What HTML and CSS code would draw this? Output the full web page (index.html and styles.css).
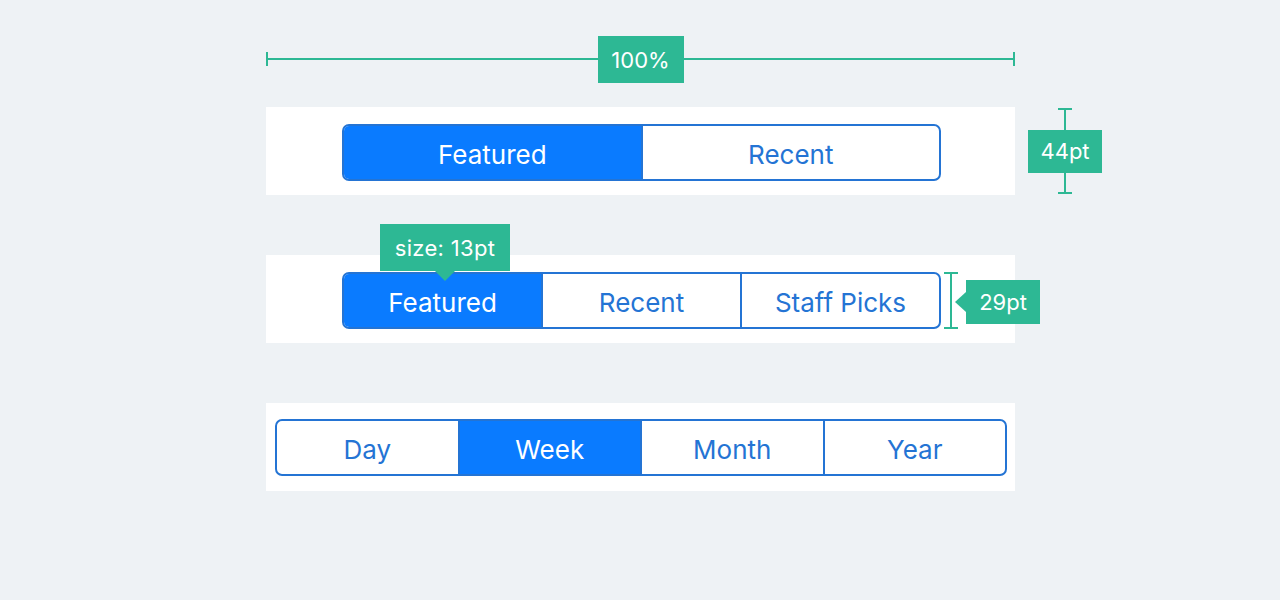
FILE: index.html
```html
<!DOCTYPE html>
<html lang="en">
<head>
  <meta charset="UTF-8" />
  <meta name="viewport" content="width=device-width, initial-scale=1.0"/>
  <title>Segmented Controls - Spec</title>
  <link rel="stylesheet" href="styles.css">
</head>
<body>
  <main class="spec">
    <div class="ruler">
      <span class="tag ruler-label">100%</span>
    </div>

    <div class="row">
      <section class="panel">
        <div class="segmented">
          <div class="segment active">Featured</div>
          <div class="segment">Recent</div>
        </div>
      </section>
      <div class="height-mark">
        <span class="tag mark-label">44pt</span>
      </div>
    </div>

    <div class="row">
      <section class="panel">
        <div class="segmented-wrap">
          <div class="segmented">
            <div class="segment active">Featured</div>
            <div class="segment">Recent</div>
            <div class="segment">Staff Picks</div>
          </div>
          <span class="tag size-tag">size: 13pt</span>
          <span class="bracket"></span>
          <span class="tag side-tag">29pt</span>
        </div>
      </section>
    </div>

    <div class="row">
      <section class="panel wide">
        <div class="segmented">
          <div class="segment">Day</div>
          <div class="segment active">Week</div>
          <div class="segment">Month</div>
          <div class="segment">Year</div>
        </div>
      </section>
    </div>
  </main>
</body>
</html>
```

FILE: styles.css
```css
body {
  margin: 0;
  background-color: #eef2f5;
  font-family: Inter, 'Noto Sans', sans-serif;
}
.spec {
  width: 749px;
  margin-left: 266px;
  padding-top: 36px;
  display: flex;
  flex-direction: column;
}

/* Teal annotation labels */
.tag {
  background-color: #2db894;
  color: white;
  font-size: 22px;
  display: flex;
  align-items: center;
  justify-content: center;
  box-sizing: border-box;
}

/* Width ruler */
.ruler {
  height: 47px;
  position: relative;
  display: flex;
  justify-content: center;
}
.ruler::before {
  content: '';
  position: absolute;
  left: 0;
  right: 0;
  top: 22px;
  height: 2px;
  background-color: #2db894;
}
.ruler::after {
  content: '';
  position: absolute;
  left: 0;
  right: 0;
  top: 16px;
  height: 14px;
  border-left: 2px solid #2db894;
  border-right: 2px solid #2db894;
}
.ruler-label {
  position: relative;
  z-index: 1;
  width: 86px;
  height: 47px;
}

.row {
  display: flex;
  margin-top: 60px;
}
.ruler + .row {
  margin-top: 24px;
}

.panel {
  flex-shrink: 0;
  width: 749px;
  height: 88px;
  background-color: white;
  box-sizing: border-box;
  padding: 17px 74px 0 76px;
}
.panel.wide {
  padding: 16px 8px 0 9px;
}

/* Segmented control */
.segmented {
  display: flex;
  height: 57px;
  box-sizing: border-box;
  border: 2px solid #2474d4;
  border-radius: 7px;
  overflow: hidden;
}
.segment {
  flex: 1;
  display: flex;
  align-items: center;
  justify-content: center;
  color: #2474d4;
  font-size: 26px;
  padding-top: 3px;
}
.segment + .segment {
  border-left: 2px solid #2474d4;
}
.segment.active {
  background-color: #0a7bff;
  color: white;
}

/* 44pt height mark */
.height-mark {
  flex-shrink: 0;
  position: relative;
  margin-left: 13px;
  width: 74px;
  display: flex;
  align-items: center;
}
.height-mark::before {
  content: '';
  position: absolute;
  left: 36px;
  width: 2px;
  top: 1px;
  bottom: 1px;
  background-color: #2db894;
}
.height-mark::after {
  content: '';
  position: absolute;
  left: 30px;
  width: 14px;
  top: 1px;
  bottom: 1px;
  box-sizing: border-box;
  border-top: 2px solid #2db894;
  border-bottom: 2px solid #2db894;
}
.mark-label {
  position: relative;
  z-index: 1;
  width: 74px;
  height: 43px;
}

/* Overlays on the second control */
.segmented-wrap {
  position: relative;
}
.size-tag {
  position: absolute;
  left: 38px;
  top: -48px;
  width: 130px;
  height: 47px;
  letter-spacing: 0.3px;
}
.size-tag::after {
  content: '';
  position: absolute;
  left: 55px;
  top: 47px;
  border-left: 10px solid transparent;
  border-right: 10px solid transparent;
  border-top: 10px solid #2db894;
}
.bracket {
  position: absolute;
  left: 602px;
  width: 14px;
  top: 0;
  bottom: 0;
  box-sizing: border-box;
  border-top: 2px solid #2db894;
  border-bottom: 2px solid #2db894;
}
.bracket::before {
  content: '';
  position: absolute;
  left: 6px;
  width: 2px;
  top: 0;
  bottom: 0;
  background-color: #2db894;
}
.side-tag {
  position: absolute;
  left: 624px;
  top: 8px;
  width: 74px;
  height: 44px;
}
.side-tag::before {
  content: '';
  position: absolute;
  left: -11px;
  top: 12px;
  border-top: 10px solid transparent;
  border-bottom: 10px solid transparent;
  border-right: 11px solid #2db894;
}
```
